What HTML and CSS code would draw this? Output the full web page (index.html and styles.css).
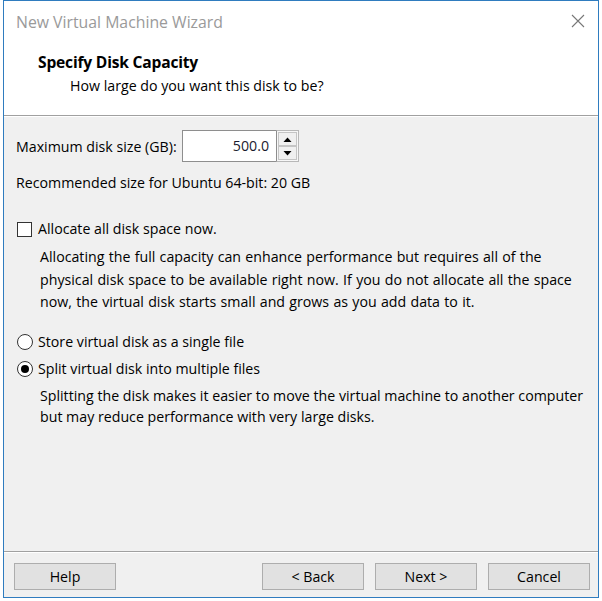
FILE: index.html
```html
<!DOCTYPE html>
<html>
<head>
<meta charset="utf-8">
<link rel="stylesheet" href="styles.css">
</head>
<body>
<div class="window">
  <div class="header">
    <div class="titlebar">
      <span class="title">New Virtual Machine Wizard</span>
      <svg class="close" width="14" height="14" viewBox="0 0 14 14"><path d="M1 1L13 13M13 1L1 13" stroke="#777" stroke-width="1.1" fill="none"/></svg>
    </div>
    <div class="heading">Specify Disk Capacity</div>
    <div class="subheading">How large do you want this disk to be?</div>
  </div>
  <div class="content">
    <div class="size-row">
      <span class="label">Maximum disk size (GB):</span>
      <div class="spin">
        <div class="spin-input">500.0</div>
        <div class="spin-btns">
          <div class="spin-btn"><svg width="9" height="5" viewBox="0 0 9 5"><path d="M0.5 5L4.5 0.5L8.5 5Z" fill="#000"/></svg></div>
          <div class="spin-btn"><svg width="9" height="5" viewBox="0 0 9 5"><path d="M0.5 0L4.5 4.5L8.5 0Z" fill="#000"/></svg></div>
        </div>
      </div>
    </div>
    <div class="recommended">Recommended size for Ubuntu 64-bit: 20 GB</div>
    <div class="option check-row">
      <span class="checkbox"></span>
      <span>Allocate all disk space now.</span>
    </div>
    <div class="desc desc-alloc">Allocating the full capacity can enhance performance but requires all of the<br>physical disk space to be available right now. If you do not allocate all the space<br>now, the virtual disk starts small and grows as you add data to it.</div>
    <div class="option radio-row first">
      <span class="radio"></span>
      <span>Store virtual disk as a single file</span>
    </div>
    <div class="option radio-row second">
      <span class="radio checked"></span>
      <span>Split virtual disk into multiple files</span>
    </div>
    <div class="desc desc-split">Splitting the disk makes it easier to move the virtual machine to another computer<br>but may reduce performance with very large disks.</div>
  </div>
  <div class="footer">
    <div class="btn">Help</div>
    <div class="spacer"></div>
    <div class="btn-group">
      <div class="btn">&lt; Back</div>
      <div class="btn">Next &gt;</div>
      <div class="btn">Cancel</div>
    </div>
  </div>
</div>
</body>
</html>
```

FILE: styles.css
```css
html, body {
  margin: 0;
  padding: 0;
  background: #ffffff;
}
body {
  font-family: "Open Sans", "Noto Sans", sans-serif;
  font-size: 14.2px;
  color: #000;
}
.window {
  margin-left: 3px;
  width: 594px;
  height: 596px;
  border: 1px solid #2f7cbf;
  display: flex;
  flex-direction: column;
  background: #f0f0f0;
}
.header {
  background: #fff;
  height: 114px;
  border-bottom: 1px solid #a0a0a0;
  display: flex;
  flex-direction: column;
}
.titlebar {
  height: 40px;
  display: flex;
  align-items: center;
  justify-content: space-between;
  padding: 0 13px 0 12px;
}
.title {
  color: #9a9a9a;
  font-size: 15.8px;
  margin-top: 2px;
}
.heading {
  font-weight: bold;
  font-size: 15.6px;
  padding-left: 34px;
  line-height: 22px;
  margin-top: 10px;
  letter-spacing: -0.2px;
}
.subheading {
  padding-left: 66px;
  line-height: 22px;
  margin-top: 2px;
}
.content {
  flex: 1;
  border-top: 1px solid #fff;
  padding-left: 12px;
  display: flex;
  flex-direction: column;
}
.size-row {
  display: flex;
  align-items: center;
  margin-top: 13px;
  height: 32px;
}
.label {
  width: 166px;
}
.spin {
  display: flex;
  height: 32px;
}
.spin-input {
  width: 86px;
  height: 30px;
  border: 1px solid #8e8e8e;
  border-right: none;
  background: #fff;
  text-align: right;
  line-height: 30px;
  padding-right: 7px;
  color: #1a1a2e;
}
.spin-btns {
  width: 23px;
  display: flex;
  flex-direction: column;
  justify-content: space-between;
  border: 1px solid #b8b8b8;
  border-left: 1px solid #8e8e8e;
  background: #f7f7f7;
  box-sizing: border-box;
  padding: 1px;
}
.spin-btn {
  height: 13px;
  border: 1px solid #c5c5c5;
  background: #f0f0f0;
  display: flex;
  align-items: center;
  justify-content: center;
}
.recommended {
  line-height: 22px;
  margin-top: 10px;
}
.option {
  display: flex;
  align-items: center;
  line-height: 22px;
}
.check-row {
  margin-top: 24px;
}
.checkbox {
  width: 13px;
  height: 13px;
  border: 1px solid #333;
  background: #fff;
  margin-left: 1px;
  margin-right: 6px;
}
.radio {
  width: 14px;
  height: 14px;
  border: 1px solid #333;
  border-radius: 50%;
  background: #fff;
  margin-left: 1px;
  margin-right: 5px;
  display: flex;
  align-items: center;
  justify-content: center;
}
.radio.checked::after {
  content: "";
  width: 8px;
  height: 8px;
  border-radius: 50%;
  background: #000;
}
.desc {
  padding-left: 24px;
  line-height: 22.5px;
  margin-top: 6px;
  white-space: nowrap;
}
.desc-alloc {
  word-spacing: 0.6px;
}
.radio-row.first {
  margin-top: 17px;
}
.radio-row.second {
  margin-top: 5px;
}
.desc-split {
  line-height: 21px;
  margin-top: 5px;
}
.footer {
  border-top: 1px solid #a0a0a0;
  box-shadow: inset 0 1px 0 #fff;
  height: 46px;
  display: flex;
  padding: 11px 8px 0 10px;
  box-sizing: border-box;
}
.spacer {
  flex: 1;
}
.btn-group {
  display: flex;
  gap: 11px;
}
.btn {
  width: 100px;
  height: 25px;
  border: 1px solid #adadad;
  background: #e1e1e1;
  display: flex;
  align-items: center;
  justify-content: center;
}
```
